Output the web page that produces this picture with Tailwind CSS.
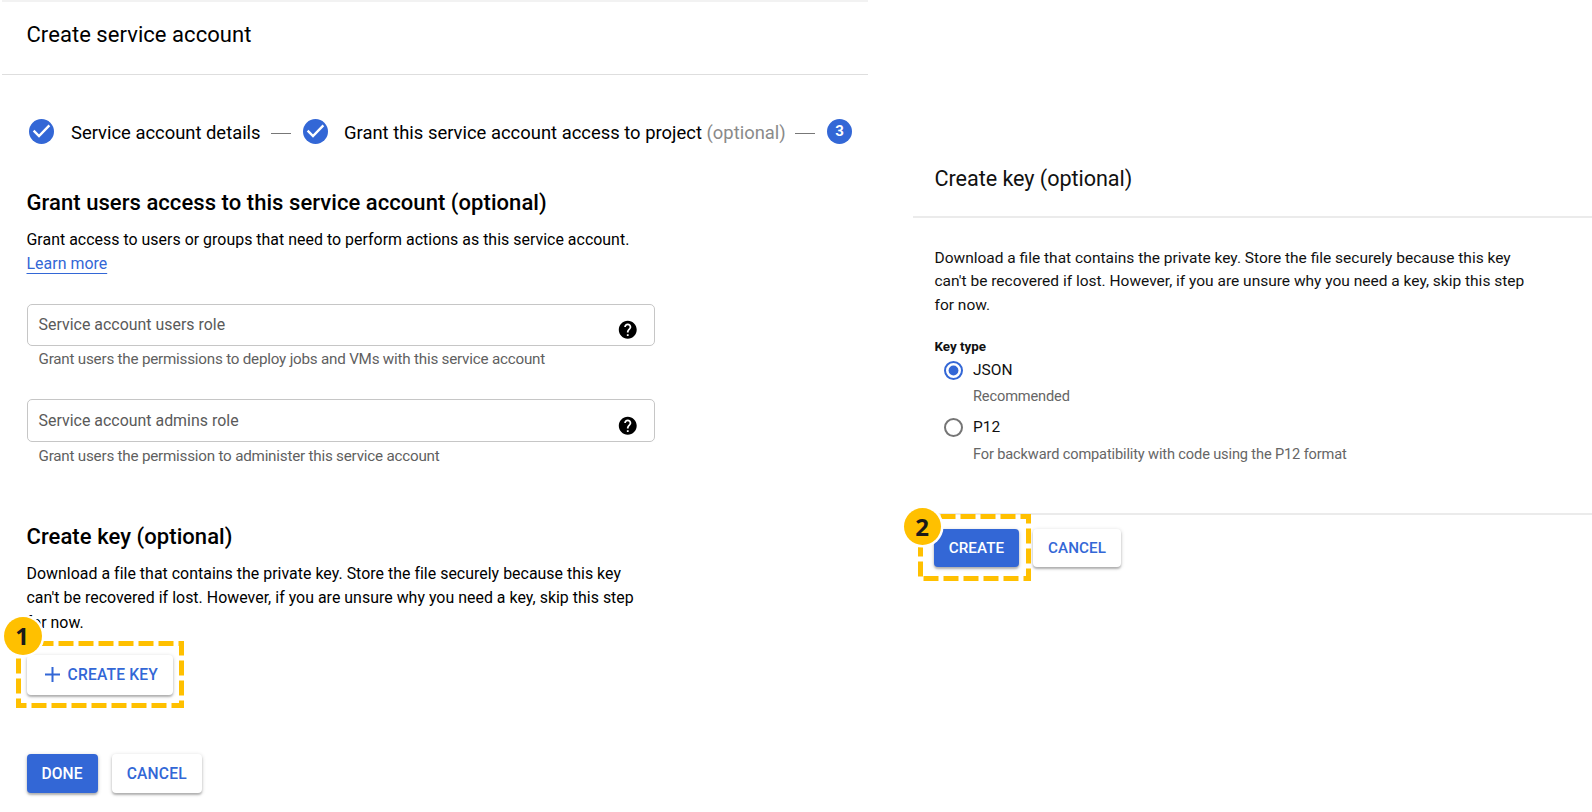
<!DOCTYPE html>
<html lang="en">
<head>
<meta charset="utf-8">
<title>Create service account</title>
<script src="https://cdn.jsdelivr.net/npm/@tailwindcss/browser@4"></script>
</head>
<body class="bg-white">
<main class="relative flex h-[812px] w-[1592px] overflow-hidden bg-white font-[Roboto,sans-serif] text-black">

  <!-- Service account wizard -->
  <section class="flex w-[868px] flex-col">
    <header class="ml-[2px] h-[75px] border-t-2 border-b border-t-[#f2f2f2] border-b-[#dedede] pt-[20px] pl-[24.5px]">
      <h1 class="text-[22px] leading-[25px] tracking-[0.05px]">Create service account</h1>
    </header>

    <div class="mt-[44px] flex h-[25px] items-start pl-[29px] text-[18.4px] leading-[27px] whitespace-nowrap">
      <svg class="size-[25px] shrink-0" viewBox="2 2 20 20"><circle cx="12" cy="12" r="10" fill="#3367d6"/><path fill="none" stroke="#fff" stroke-width="1.9" d="M5.7 11.3l4.3 4.3L18.3 7.1"/></svg>
      <span class="ml-[16px] w-[191px] pl-px">Service account details</span>
      <span class="mt-[14px] ml-[10px] h-px w-[20px] bg-[#777]"></span>
      <svg class="ml-[12px] size-[25px] shrink-0" viewBox="2 2 20 20"><circle cx="12" cy="12" r="10" fill="#3367d6"/><path fill="none" stroke="#fff" stroke-width="1.9" d="M5.7 11.3l4.3 4.3L18.3 7.1"/></svg>
      <span class="ml-[15px] w-[452px] pl-px tracking-[0.01px]">Grant this service account access to project <span class="text-[#8a8a8a]">(optional)</span></span>
      <span class="mt-[14px] h-px w-[20px] bg-[#777]"></span>
      <span class="ml-[12px] flex size-[25px] items-center justify-center rounded-full bg-[#3367d6] text-[15px] font-bold leading-none text-white">3</span>
    </div>

    <div class="flex flex-col pl-[26.5px]">
      <h2 class="mt-[44px] text-[22px] leading-[29px] font-medium tracking-[0.06px]">Grant users access to this service account (optional)</h2>
      <p class="mt-[10.5px] text-[15.9px] leading-[24.2px] tracking-[0.03px]">Grant access to users or groups that need to perform actions as this service account.<br><a class="text-[#3367d6] underline decoration-1 underline-offset-[4px]">Learn more</a></p>

      <div class="mt-[28px] flex h-[42px] w-[628px] items-center justify-between rounded-[5px] border border-[#c6c6c6] pr-[15px] pl-[11px] text-[15.9px] text-[#5a5a5a]">
        <span class="tracking-[0.02px]">Service account users role</span>
        <svg class="mt-[10px] size-[21.5px]" viewBox="0 0 24 24"><path fill="#000" d="M12 2C6.48 2 2 6.48 2 12s4.48 10 10 10 10-4.48 10-10S17.52 2 12 2zm1 17h-2v-2h2v2zm2.07-7.75l-.9.92C13.45 12.9 13 13.5 13 15h-2v-.5c0-1.1.45-2.1 1.17-2.83l1.24-1.26c.37-.36.59-.86.59-1.41 0-1.1-.9-2-2-2s-2 .9-2 2H8c0-2.21 1.79-4 4-4s4 1.79 4 4c0 .88-.36 1.68-.93 2.25z"/></svg>
      </div>
      <p class="mt-[3.5px] pl-[12px] text-[15.2px] leading-[20px] tracking-[-0.21px] text-[#5f5f5f]">Grant users the permissions to deploy jobs and VMs with this service account</p>

      <div class="mt-[29.6px] flex h-[43px] w-[628px] items-center justify-between rounded-[5px] border border-[#c6c6c6] pr-[15px] pl-[11px] text-[15.9px] text-[#5a5a5a]">
        <span class="mt-px tracking-[0.02px]">Service account admins role</span>
        <svg class="mt-[11px] size-[21.5px]" viewBox="0 0 24 24"><path fill="#000" d="M12 2C6.48 2 2 6.48 2 12s4.48 10 10 10 10-4.48 10-10S17.52 2 12 2zm1 17h-2v-2h2v2zm2.07-7.75l-.9.92C13.45 12.9 13 13.5 13 15h-2v-.5c0-1.1.45-2.1 1.17-2.83l1.24-1.26c.37-.36.59-.86.59-1.41 0-1.1-.9-2-2-2s-2 .9-2 2H8c0-2.21 1.79-4 4-4s4 1.79 4 4c0 .88-.36 1.68-.93 2.25z"/></svg>
      </div>
      <p class="mt-[4px] pl-[12px] text-[15.2px] leading-[20px] tracking-[-0.21px] text-[#5f5f5f]">Grant users the permission to administer this service account</p>

      <h2 class="mt-[56px] text-[22px] leading-[29px] font-medium tracking-[0.07px]">Create key (optional)</h2>
      <p class="mt-[10.5px] text-[15.9px] leading-[24.5px] tracking-[0.03px] whitespace-nowrap">Download a file that contains the private key. Store the file securely because this key<br>can't be recovered if lost. However, if you are unsure why you need a key, skip this step<br>for now.</p>

      <button class="mt-[20px] flex h-[40px] w-[146px] items-center rounded-[4px] bg-white pl-[18px] text-[15.6px] font-medium text-[#3367d6] shadow-[0_1px_4px_rgba(0,0,0,0.18),0_2px_2px_rgba(0,0,0,0.22)]">
        <svg class="mr-[8px] mb-[2px] size-[15px]" viewBox="0 0 15 15"><path stroke="#3367d6" stroke-width="2" d="M7.5 0v15M0 7.5h15"/></svg>
        <span class="mt-[2px] tracking-[0.2px]">CREATE KEY</span>
      </button>

      <div class="mt-[59px] flex gap-[14.5px] text-[15.6px] font-medium">
        <button class="h-[39px] w-[71px] rounded-[4px] bg-[#3367d6] pt-[2px] text-white shadow-[0_1px_4px_rgba(0,0,0,0.18),0_2px_2px_rgba(0,0,0,0.22)]"><span class="tracking-[0.1px]">DONE</span></button>
        <button class="h-[39px] w-[89.5px] rounded-[4px] bg-white pt-[2px] text-[#3367d6] shadow-[0_1px_4px_rgba(0,0,0,0.18),0_2px_2px_rgba(0,0,0,0.22)]"><span class="tracking-[0.2px]">CANCEL</span></button>
      </div>
    </div>
  </section>

  <!-- Key dialog -->
  <section class="ml-[45px] flex flex-1 flex-col pt-[165px]">
    <h2 class="h-[51px] pl-[21.5px] text-[21.6px] leading-[27px] tracking-[-0.05px] text-[#111]">Create key (optional)</h2>
    <div class="h-[2px] bg-[#ebebeb]"></div>
    <div class="flex flex-col pl-[21.5px] text-[#111]">
      <p class="mt-[28.6px] text-[15.5px] leading-[23.8px] whitespace-nowrap">Download a file that contains the private key. Store the file securely because this key<br>can't be recovered if lost. However, if you are unsure why you need a key, skip this step<br>for now.</p>
      <p class="mt-[19.4px] text-[13.4px] leading-[20px] font-bold">Key type</p>
      <div class="mt-[3px] flex gap-[10px] pl-[9.5px]">
        <svg class="mt-[1px] size-[19px]" viewBox="0 0 19 19"><circle cx="9.5" cy="9.5" r="8.5" fill="none" stroke="#3367d6" stroke-width="2"/><circle cx="9.5" cy="9.5" r="4.9" fill="#3367d6"/></svg>
        <div>
          <p class="text-[15.5px] leading-[20px]">JSON</p>
          <p class="mt-[6px] text-[14.6px] leading-[20px] tracking-[-0.14px] text-[#666]">Recommended</p>
        </div>
      </div>
      <div class="mt-[11px] flex gap-[10px] pl-[9.5px]">
        <svg class="mt-[1px] size-[19px]" viewBox="0 0 19 19"><circle cx="9.5" cy="9.5" r="8.5" fill="none" stroke="#757575" stroke-width="2"/></svg>
        <div>
          <p class="text-[15.5px] leading-[20px]">P12</p>
          <p class="mt-[7px] text-[14.6px] leading-[20px] tracking-[-0.14px] text-[#666]">For backward compatibility with code using the P12 format</p>
        </div>
      </div>
    </div>
    <div class="mt-[49px] h-[2px] bg-[#ebebeb]"></div>
    <div class="mt-[14px] flex gap-[14px] pl-[21px] text-[15.2px] font-medium">
      <button class="h-[38px] w-[85px] rounded-[4px] bg-[#3367d6] text-white shadow-[0_1px_4px_rgba(0,0,0,0.18),0_2px_2px_rgba(0,0,0,0.22)]"><span class="tracking-[0.1px]">CREATE</span></button>
      <button class="h-[38px] w-[88px] rounded-[4px] bg-white text-[#3367d6] shadow-[0_1px_4px_rgba(0,0,0,0.18),0_2px_2px_rgba(0,0,0,0.22)]"><span class="tracking-[0.1px]">CANCEL</span></button>
    </div>
  </section>

  <!-- Callouts drawn over both panels -->
  <svg class="absolute top-[641px] left-[16px] h-[67px] w-[168px]" viewBox="0 0 168 67"><rect x="2.5" y="2.5" width="163" height="62" fill="none" stroke="#ffc000" stroke-width="5" stroke-dasharray="15 5"/></svg>
  <span class="absolute top-[617px] left-[4px] flex size-[38px] items-center justify-center rounded-full bg-[#ffc000] pr-[2px] font-['Noto_Sans'] text-[24px] leading-none font-bold text-[#1a1a1a] ring-[2.5px] ring-white">1</span>
  <svg class="absolute top-[514px] left-[918px] h-[67px] w-[113px]" viewBox="0 0 113 67"><rect x="2.5" y="2.5" width="108" height="62" fill="none" stroke="#ffc000" stroke-width="5" stroke-dasharray="15 5"/></svg>
  <span class="absolute top-[508px] left-[904px] flex size-[37px] items-center justify-center rounded-full bg-[#ffc000] pr-[1px] font-['Noto_Sans'] text-[24px] leading-none font-bold text-[#1a1a1a] ring-[2.5px] ring-white">2</span>
</main>
</body>
</html>
